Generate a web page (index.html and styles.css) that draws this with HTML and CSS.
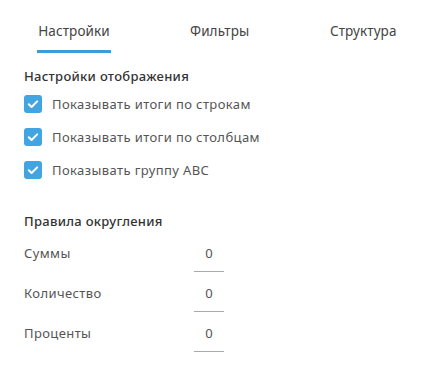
FILE: index.html
```html
<!DOCTYPE html>
<html lang="ru">
<head>
<meta charset="utf-8">
<link rel="stylesheet" href="styles.css">
</head>
<body>
<div class="panel">
  <div class="tabs">
    <div class="tab active">Настройки</div>
    <div class="tab">Фильтры</div>
    <div class="tab">Структура</div>
  </div>
  <div class="section">
    <div class="heading">Настройки отображения</div>
    <label class="check"><span class="box"><svg viewBox="0 0 18 18" width="18" height="18"><path d="M4.8 9.2l2.8 2.8 5.6-5.6" fill="none" stroke="#fff" stroke-width="2" stroke-linecap="round" stroke-linejoin="round"/></svg></span><span class="ctext">Показывать итоги по строкам</span></label>
    <label class="check"><span class="box"><svg viewBox="0 0 18 18" width="18" height="18"><path d="M4.8 9.2l2.8 2.8 5.6-5.6" fill="none" stroke="#fff" stroke-width="2" stroke-linecap="round" stroke-linejoin="round"/></svg></span><span class="ctext">Показывать итоги по столбцам</span></label>
    <label class="check"><span class="box"><svg viewBox="0 0 18 18" width="18" height="18"><path d="M4.8 9.2l2.8 2.8 5.6-5.6" fill="none" stroke="#fff" stroke-width="2" stroke-linecap="round" stroke-linejoin="round"/></svg></span><span class="ctext">Показывать группу ABC</span></label>
  </div>
  <div class="section round">
    <div class="heading">Правила округления</div>
    <div class="row"><span class="rlabel">Суммы</span><span class="num">0</span></div>
    <div class="row"><span class="rlabel">Количество</span><span class="num">0</span></div>
    <div class="row"><span class="rlabel">Проценты</span><span class="num">0</span></div>
  </div>
</div>
</body>
</html>
```
FILE: styles.css
```css
html, body { margin: 0; padding: 0; background: #fff; }
body { font-family: "Noto Sans", Roboto, sans-serif; color: #444; }
.panel { width: 422px; height: 369px; box-sizing: border-box; padding: 0 24px; }
.tabs { display: flex; height: 53px; padding-left: 13px; }
.tab { font-size: 13.5px; color: #444; padding-top: 22px; box-sizing: border-box; height: 53px; white-space: nowrap; letter-spacing: 0.1px; }
.tab:nth-child(1) { width: 74px; border-bottom: 3px solid #3b9edb; margin-right: 79px; text-align: center; }
.tab:nth-child(2) { width: 60px; margin-right: 80px; }
.section { padding-top: 14px; }
.heading { font-size: 13px; font-weight: 500; color: #333; line-height: 18px; margin-bottom: 10px; letter-spacing: 0.3px; }
.check { display: flex; align-items: center; height: 18px; margin-bottom: 15px; }
.box { width: 18px; height: 18px; border-radius: 3px; background: #42a5e2; display: flex; margin-right: 10px; flex: none; }
.ctext { font-size: 13px; color: #555; white-space: nowrap; letter-spacing: 0.4px; }
.round { padding-top: 18px; }
.round .heading { margin-bottom: 11px; }
.row { display: flex; align-items: flex-start; height: 40px; }
.rlabel { width: 170px; font-size: 13px; color: #555; padding-top: 3px; letter-spacing: 0.4px; }
.num { width: 30px; height: 31px; box-sizing: border-box; border-bottom: 1px solid #aaa; text-align: center; font-size: 13px; color: #555; padding-top: 3px; }
```
